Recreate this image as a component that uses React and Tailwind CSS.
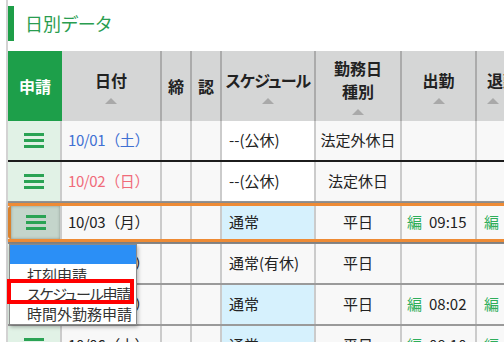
import React from "react";

const cols = "grid grid-cols-[54px_100px_30px_30px_94px_86px_75px_90px]";

const SortMark = () => (
  <svg width="12" height="6" viewBox="0 0 12 6" className="mt-[6px]">
    <polygon points="6,0 12,6 0,6" fill="#a9a9a9" />
  </svg>
);

const Burger = () => (
  <div className="flex flex-col gap-[3px]">
    <span className="block w-[20px] h-[3px] bg-[#2aa354]" />
    <span className="block w-[20px] h-[3px] bg-[#2aa354]" />
    <span className="block w-[20px] h-[3px] bg-[#2aa354]" />
  </div>
);

const rows = [
  { date: "10/01（土）", color: "text-[#3f70d3]", sched: "--(公休)", schedBg: "bg-white", kind: "法定外休日", sep: "border-[#1c1c1c]" },
  { date: "10/02（日）", color: "text-[#f06b7a]", sched: "--(公休)", schedBg: "bg-white", kind: "法定休日", sep: "border-[#9a9a9a]" },
  { date: "10/03（月）", color: "text-[#222]", sched: "通常", schedBg: "bg-[#d6f1fd]", kind: "平日", start: "09:15", end: true, active: true, sep: "border-[#8e8e8e]" },
  { date: "10/04（火）", color: "text-[#222]", sched: "通常(有休)", schedBg: "bg-[#f8f8f8]", kind: "平日", sep: "border-[#9a9a9a]" },
  { date: "10/05（水）", color: "text-[#222]", sched: "通常", schedBg: "bg-[#d6f1fd]", kind: "平日", start: "08:02", end: true, sep: "border-[#9a9a9a]" },
  { date: "10/06（木）", color: "text-[#222]", sched: "通常", schedBg: "bg-[#d6f1fd]", kind: "平日", start: "08:10", end: true, sep: "border-[#9a9a9a]" },
];

const Row = ({ r }) => {
  const cell = "border-r-2 border-[#cbcbcb] flex items-center whitespace-nowrap";
  return (
    <div className={`h-[41px] border-b-2 ${r.sep}`}>
      <div
        className={`${cols} h-full bg-[#f8f8f8] ${
          r.active ? "border-y-[3px] border-[#ee8b35] shadow-[0_0_3px_rgba(0,0,0,0.25)]" : ""
        }`}
      >
        <div
          className={`${cell} justify-center ${
            r.active
              ? "bg-[#c4d5cb] border-l-[3px] border-l-[#d9822f] rounded-l-[3px] shadow-[inset_0_0_3px_rgba(0,0,0,0.3)]"
              : "bg-[#e1f2e6]"
          }`}
        >
          <Burger />
        </div>
        <div className={`${cell} pl-[6px] text-[15px] tracking-[-0.4px] ${r.color}`}>{r.date}</div>
        <div className={cell} />
        <div className={cell} />
        <div className={`${cell} pl-[7px] text-[15px] ${r.schedBg}`}>{r.sched}</div>
        <div className={`${cell} justify-center text-[15px]`}>{r.kind}</div>
        <div className={`${cell} pl-[5px] text-[15px]`}>
          {r.start && (
            <>
              <span className="text-[#2fae5a]">編</span>
              <span className="ml-[7px]">{r.start}</span>
            </>
          )}
        </div>
        <div className="flex items-center pl-[7px] text-[15px]">
          {r.end && <span className="text-[#2fae5a]">編</span>}
        </div>
      </div>
    </div>
  );
};

export default function App() {
  const head = "border-r-2 border-[#ababab] flex flex-col items-center justify-center font-bold text-[16px] text-[#222] whitespace-nowrap";
  return (
    <div className="relative w-[504px] h-[342px] overflow-hidden bg-white text-[#222] font-['Noto_Sans_CJK_JP','Noto_Sans',sans-serif]">
      <div className="ml-[6px] h-full border-l-2 border-[#d3d3d3]">
        <div className="h-[51px] pt-[6px]">
          <div className="h-[35px] border-l-[6px] border-[#1e9e48] pl-[11px] flex items-center text-[18px] text-[#2a9d50] [font-feature-settings:'palt']">
            日別データ
          </div>
        </div>
        <div className="w-[560px]">
          <div className={`${cols} h-[70px] bg-[#d5d6d6]`}>
            <div className="bg-[#1d9f4a] flex items-center justify-center text-white font-bold text-[16px]">申請</div>
            <div className={head}>
              <span>日付</span>
              <SortMark />
            </div>
            <div className={head}>締</div>
            <div className={head}>認</div>
            <div className={head}>
              <span className="[font-feature-settings:'palt'] tracking-[-0.8px]">スケジュール</span>
              <SortMark />
            </div>
            <div className={`${head} leading-[23px]`}>
              <span>勤務日</span>
              <span>種別</span>
              <SortMark />
            </div>
            <div className={head}>
              <span>出勤</span>
              <SortMark />
            </div>
            <div className="flex flex-col items-start justify-center pl-[10px] font-bold text-[16px] text-[#222]">
              <span>退勤</span>
              <SortMark />
            </div>
          </div>
          {rows.map((r) => (
            <Row key={r.date} r={r} />
          ))}
        </div>
      </div>

      <div className="absolute left-[9px] top-[244px] w-[128px] bg-white border border-[#8a8a8a] shadow-[1px_2px_4px_rgba(0,0,0,0.3)] text-[15px] text-[#333] whitespace-nowrap">
        <div className="h-[19px] bg-[#2b8ff6]" />
        <div className="h-[20px] leading-[22px] pl-[17px]">打刻申請</div>
        <div className="h-[20px] leading-[20px] pl-[17px] [font-feature-settings:'palt'] tracking-[-1.2px]">スケジュール申請</div>
        <div className="h-[20px] leading-[20px] pl-[17px]">時間外勤務申請</div>
      </div>
      <div className="absolute left-[7px] top-[279px] w-[127px] h-[25px] border-4 border-[#ff0000]" />
    </div>
  );
}
